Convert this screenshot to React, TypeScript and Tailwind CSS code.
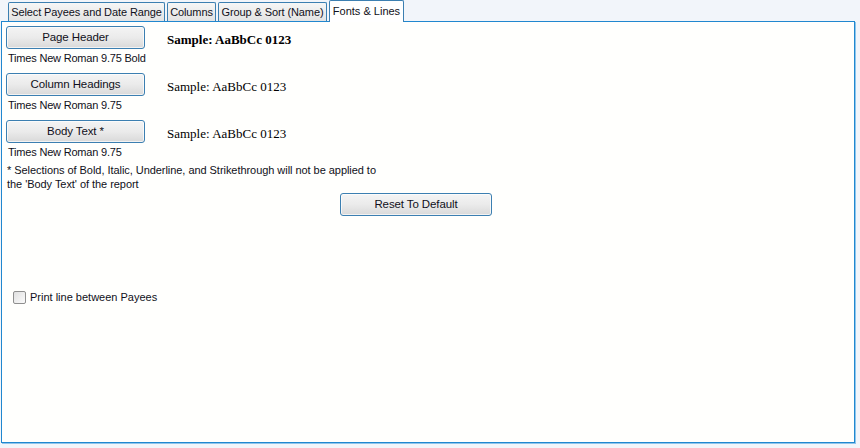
import React from "react";

const ui = { fontFamily: '"Liberation Sans", Arial, sans-serif' };
const serif = { fontFamily: '"Liberation Serif", "Times New Roman", serif' };

function WinButton({ label, className = "" }: { label: string; className?: string }) {
  return (
    <button
      className={`h-[23px] rounded-[3px] border border-[#3c7fb1] bg-gradient-to-b from-[#f4f4f4] via-[#ebebeb] to-[#d9d9d9] text-[11.5px] leading-none tracking-[-0.1px] text-[#101020] shadow-[inset_0_0_0_1px_#ffffffaa] ${className}`}
      style={ui}
    >
      {label}
    </button>
  );
}

function FontRow({ label, font, bold }: { label: string; font: string; bold?: boolean }) {
  return (
    <div className="flex items-start">
      <div className="flex w-[161px] flex-col">
        <WinButton label={label} className="w-[139px]" />
        <span className="ml-[2px] mt-[2px] text-[11px] leading-[14px] tracking-[-0.2px] text-[#101020]" style={ui}>
          {font}
        </span>
      </div>
      <span
        className={`mt-[6px] text-[13px] leading-[15px] text-black ${bold ? "font-bold" : ""}`}
        style={serif}
      >
        Sample: AaBbCc 0123
      </span>
    </div>
  );
}

const tabs = [
  { label: "Select Payees and Date Range", w: "w-[157px]" },
  { label: "Columns", w: "w-[49px]" },
  { label: "Group & Sort (Name)", w: "w-[109px]" },
];

export default function App() {
  return (
    <div className="h-[448px] w-[860px] bg-[#f2f5fa] text-[#101020]" style={ui}>
      {/* tab strip */}
      <div className="flex h-[21px] items-end gap-[2px] pl-[8px]">
        {tabs.map((t) => (
          <div
            key={t.label}
            className={`flex h-[19px] items-center justify-center whitespace-nowrap rounded-t-[2px] border border-b-0 border-[#3c7fb1] bg-gradient-to-b from-[#f6f6f6] to-[#e3e3e3] text-[11px] leading-none tracking-[-0.1px] ${t.w}`}
          >
            {t.label}
          </div>
        ))}
        <div className="relative z-10 -mb-px flex h-[22px] w-[75px] items-center justify-center rounded-t-[2px] border border-b-0 border-[#3c7fb1] bg-white text-[11px] leading-none">
          Fonts &amp; Lines
        </div>
      </div>

      {/* panel */}
      <div className="ml-px h-[422px] w-[854px] border border-[#2187cf] bg-[#fffffd] pl-[4px] pt-[4px] shadow-[1px_1px_0_#8ec6ec]">
        <div className="flex flex-col gap-[8px]">
          <FontRow label="Page Header" font="Times New Roman 9.75 Bold" bold />
          <FontRow label="Column Headings" font="Times New Roman 9.75" />
          <FontRow label="Body Text *" font="Times New Roman 9.75" />
        </div>
        <p className="ml-[1px] mt-[4px] w-[376px] text-[11px] leading-[14px] tracking-[-0.05px]">
          * Selections of Bold, Italic, Underline, and Strikethrough will not be applied to the
          'Body Text' of the report
        </p>
        <div className="ml-[334px] mt-0">
          <WinButton label="Reset To Default" className="w-[152px]" />
        </div>
        <label className="ml-[7px] mt-[73px] flex items-center gap-[4px] text-[11px]">
          <span className="h-[13px] w-[13px] rounded-[2px] border border-[#8f8f8f] bg-gradient-to-br from-[#e0e0e0] to-[#fbfbfb]" />
          Print line between Payees
        </label>
      </div>
    </div>
  );
}
